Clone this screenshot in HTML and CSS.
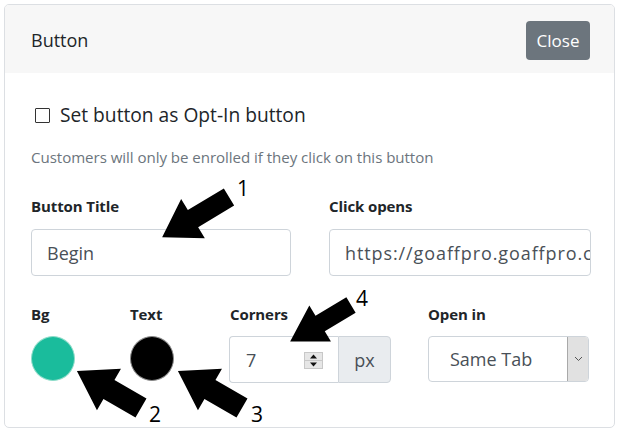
FILE: index.html
```html
<!DOCTYPE html>
<html>
<head>
<meta charset="utf-8">
<link rel="stylesheet" href="styles.css">
</head>
<body>
<div class="page">
  <div class="card">
    <div class="card-header">
      <div class="title">Button</div>
      <button class="btn-close">Close</button>
    </div>
    <div class="card-body">
      <label class="check-row">
        <span class="checkbox"></span>
        <span class="check-label">Set button as Opt-In button</span>
      </label>
      <div class="help">Customers will only be enrolled if they click on this button</div>

      <div class="row-two">
        <div class="field">
          <div class="label">Button Title</div>
          <div class="input">Begin</div>
        </div>
        <div class="field">
          <div class="label">Click opens</div>
          <div class="input url">https://goaffpro.goaffpro.com</div>
        </div>
      </div>

      <div class="row-four">
        <div class="field">
          <div class="label">Bg</div>
          <div class="swatch swatch-green"></div>
        </div>
        <div class="field">
          <div class="label">Text</div>
          <div class="swatch swatch-black"></div>
        </div>
        <div class="field">
          <div class="label">Corners</div>
          <div class="input-group">
            <div class="num-input">
              <span class="num-value">7</span>
              <svg class="spinner" width="19" height="17" viewBox="0 0 19 17">
                <rect x="0.5" y="0.5" width="18" height="16" fill="#f0f0f0" stroke="#c8c8c8"/>
                <rect x="1" y="1" width="17" height="7" fill="#e6e6e6"/>
                <rect x="1" y="9" width="17" height="7" fill="#e6e6e6"/>
                <line x1="1" y1="8.5" x2="18" y2="8.5" stroke="#c8c8c8"/>
                <polygon points="9.5,2.5 13,6.5 6,6.5" fill="#111"/>
                <polygon points="6,10.5 13,10.5 9.5,14.5" fill="#111"/>
              </svg>
            </div>
            <div class="addon">px</div>
          </div>
        </div>
        <div class="field">
          <div class="label">Open in</div>
          <div class="select">
            <span class="select-value">Same Tab</span>
            <span class="select-btn">
              <svg width="9" height="6" viewBox="0 0 9 6"><polyline points="1,1 4.5,4.5 8,1" fill="none" stroke="#555" stroke-width="1"/></svg>
            </span>
          </div>
        </div>
      </div>
    </div>
  </div>

  <svg class="annotations" width="617" height="432" viewBox="0 0 617 432">
    <path transform="translate(229 197) rotate(149)" d="M0,-10 L42,-10 L42,-23 L78,0 L42,23 L42,10 L0,10 Z" fill="#000"/>
    <path transform="translate(141 408) rotate(210)" d="M0,-11 L37,-11 L37,-24 L74,0 L37,24 L37,11 L0,11 Z" fill="#000"/>
    <path transform="translate(242 408) rotate(210)" d="M0,-11 L37,-11 L37,-24 L74,0 L37,24 L37,11 L0,11 Z" fill="#000"/>
    <path transform="translate(351 305) rotate(149)" d="M0,-9 L36,-9 L36,-21 L71,0 L36,21 L36,9 L0,9 Z" fill="#000"/>
    <text class="num" x="237" y="196">1</text>
    <text class="num" x="149" y="422">2</text>
    <text class="num" x="251" y="422">3</text>
    <text class="num" x="356" y="306">4</text>
  </svg>
</div>
</body>
</html>
```

FILE: styles.css
```css
* { box-sizing: border-box; }

html, body {
  margin: 0;
  padding: 0;
  background: #ffffff;
}

body {
  font-family: "Open Sans", "Noto Sans", "DejaVu Sans", sans-serif;
  color: #212529;
}

.page {
  position: relative;
  width: 617px;
  height: 432px;
  padding: 4px 3px 0 4px;
}

.card {
  width: 611px;
  height: 424px;
  border: 1px solid #dcdfe3;
  border-radius: 5px;
  overflow: hidden;
  background: #fff;
}

.card-header {
  height: 68px;
  background: #f7f7f7;
  display: flex;
  align-items: center;
  justify-content: space-between;
  padding: 0 24px 0 26px;
}

.title {
  font-size: 18px;
  color: #212529;
  line-height: 24px;
  margin-top: 2px;
}

.btn-close {
  font-family: inherit;
  font-size: 17px;
  color: #fff;
  background: #6c757d;
  border: none;
  border-radius: 4px;
  width: 64px;
  height: 39px;
  padding: 0;
  margin-top: 2px;
}

.card-body {
  padding: 30px 20px 0 26px;
}

.check-row {
  display: flex;
  align-items: center;
  height: 24px;
  gap: 10px;
  padding-left: 4px;
}

.checkbox {
  width: 15px;
  height: 15px;
  border: 1px solid #333;
  border-radius: 1px;
  background: #fff;
  flex: none;
}

.check-label {
  font-size: 19.2px;
  color: #212529;
  line-height: 24px;
}

.help {
  margin-top: 20px;
  font-size: 15.1px;
  line-height: 20px;
  color: #6c757d;
  letter-spacing: -0.05px;
}

.row-two {
  margin-top: 29px;
  display: grid;
  grid-template-columns: 260px 262px;
  column-gap: 38px;
}

.label {
  font-size: 15px;
  font-weight: 700;
  line-height: 20px;
  color: #212529;
  letter-spacing: -0.1px;
}

.input {
  margin-top: 13px;
  height: 47px;
  border: 1px solid #ced4da;
  border-radius: 4px;
  padding: 0 15px;
  font-size: 18px;
  color: #495057;
  display: flex;
  align-items: center;
  white-space: nowrap;
  overflow: hidden;
}

.url {
  padding-right: 8px;
  letter-spacing: 0.9px;
}

.row-four {
  margin-top: 28px;
  display: grid;
  grid-template-columns: 99px 100px 198px 161px;
}

.row-four .label {
  margin-bottom: 12px;
}

.swatch {
  width: 44px;
  height: 45px;
  border-radius: 50%;
}

.swatch-green {
  background: #1abc9c;
  border: 1px solid #8fdcc9;
}

.swatch-black {
  background: #000;
  border: 1px solid #8a8a8a;
}

.input-group {
  display: flex;
  width: 162px;
  height: 47px;
  margin-left: -1px;
}

.num-input {
  flex: 1;
  display: flex;
  align-items: center;
  justify-content: space-between;
  border: 1px solid #ced4da;
  border-right: none;
  border-radius: 4px 0 0 4px;
  padding: 0 15px 0 16px;
}

.num-value {
  font-size: 18px;
  color: #495057;
}

.spinner {
  display: block;
  margin-top: 2px;
}

.addon {
  width: 53px;
  background: #e9ecef;
  border: 1px solid #ced4da;
  border-radius: 0 4px 4px 0;
  display: flex;
  align-items: center;
  justify-content: center;
  font-size: 18px;
  color: #495057;
}

.select {
  margin-top: 1px;
  height: 46px;
  border: 1px solid #ced4da;
  border-radius: 4px;
  display: flex;
  align-items: stretch;
  overflow: hidden;
}

.select-value {
  flex: 1;
  display: flex;
  align-items: center;
  padding-left: 21px;
  font-size: 18px;
  color: #495057;
}

.select-btn {
  width: 21px;
  background: #e1e1e1;
  border-left: 1px solid #a9a9a9;
  display: flex;
  align-items: center;
  justify-content: center;
}

.select-btn svg {
  display: block;
}

.annotations {
  position: absolute;
  left: 0;
  top: 0;
  pointer-events: none;
}

.num {
  font-family: "Open Sans", "Noto Sans", sans-serif;
  font-size: 21px;
  fill: #000;
}
```
